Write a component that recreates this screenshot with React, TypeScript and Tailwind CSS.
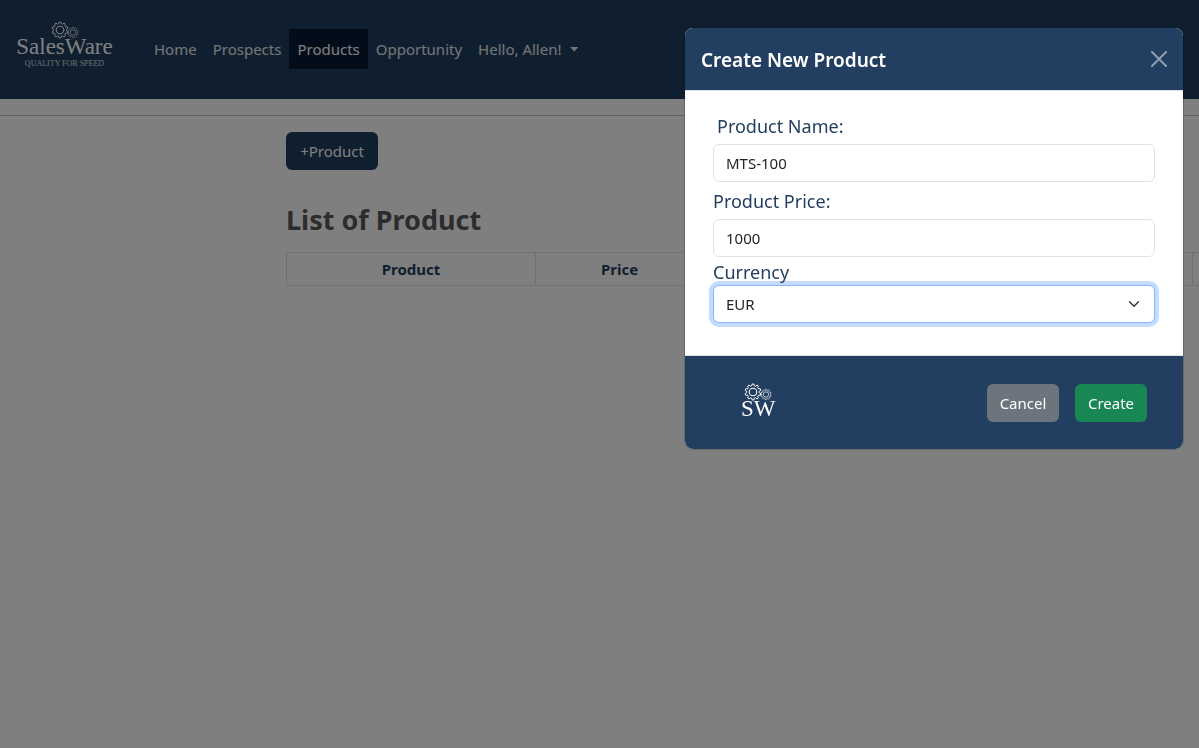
import { useState } from "react";
import type { ReactNode } from "react";

function gearPath(cx: number, cy: number, outer: number, root: number, teeth: number) {
  const step = (Math.PI * 2) / teeth;
  const points: string[] = [];
  for (let i = 0; i < teeth; i++) {
    const a = i * step - Math.PI / 2;
    const corners: [number, number][] = [
      [root, -0.32],
      [outer, -0.18],
      [outer, 0.18],
      [root, 0.32],
    ];
    for (const [r, offset] of corners) {
      const t = a + offset * step;
      points.push(`${(cx + r * Math.cos(t)).toFixed(2)} ${(cy + r * Math.sin(t)).toFixed(2)}`);
    }
  }
  return `M${points.join("L")}Z`;
}

function Gears() {
  return (
    <svg viewBox="0 0 28 18" className="h-[18px] w-7" fill="none" stroke="currentColor" strokeLinejoin="round" aria-hidden="true">
      <path d={gearPath(9, 9, 8, 6.4, 10)} strokeWidth="1" />
      <circle cx="9" cy="9" r="3.8" strokeWidth="1.1" />
      <path d={gearPath(22, 11.5, 5.2, 4.2, 10)} strokeWidth="0.6" />
      <circle cx="22" cy="11.5" r="2.7" strokeWidth="0.7" />
    </svg>
  );
}

function NavLink({ children, active = false }: { children: ReactNode; active?: boolean }) {
  return (
    <a
      href="#"
      className={
        active
          ? "flex h-10 items-center bg-[#071b33] px-2 pt-0.5 text-white"
          : "flex h-10 items-center px-2 pt-0.5 text-white/90"
      }
    >
      {children}
    </a>
  );
}

function Navbar() {
  return (
    <nav className="flex h-[99px] items-center bg-[#1f3f5f] pb-0.5 text-[15px]">
      <a href="#" className="flex h-[74px] w-[130px] shrink-0 flex-col items-center border-r border-[#1b3857] pt-[9px] font-['Liberation_Serif',serif] text-white">
        <Gears />
        <span className="-mt-1 text-[23px] leading-6">SalesWare</span>
        <span className="mt-px text-[8px] leading-2 text-white/80">QUALITY FOR SPEED</span>
      </a>
      <div className="ml-4 flex">
        <NavLink>Home</NavLink>
        <NavLink>Prospects</NavLink>
        <NavLink active>Products</NavLink>
        <NavLink>Opportunity</NavLink>
        <NavLink>
          Hello, Allen!
          <svg viewBox="0 0 10 5" className="ml-2 h-[5px] w-[10px]" fill="currentColor" aria-hidden="true">
            <path d="M1 0h8.4L5.2 4.4z" />
          </svg>
        </NavLink>
      </div>
    </nav>
  );
}

function CreateProductDialog() {
  const [name, setName] = useState("MTS-100");
  const [price, setPrice] = useState("1000");
  const [currency, setCurrency] = useState("EUR");
  const field = "h-[38px] w-full rounded-md border border-[#dee2e6] bg-white px-3 text-[15px] text-[#212529] outline-none";
  const label = "text-lg leading-[27px] text-[#223e60]";

  return (
    <div className="fixed inset-0 flex items-start justify-end bg-black/50 px-4 py-7">
      <form
        role="dialog"
        aria-labelledby="dialog-title"
        onSubmit={(e) => e.preventDefault()}
        className="w-full max-w-[498px] overflow-hidden rounded-lg bg-white shadow-[0_0_0_1px_rgba(0,0,0,0.18)]"
      >
        <header className="flex h-[63px] items-center justify-between border-b border-[#dee2e6] bg-[#223e60] px-4 text-white">
          <h2 id="dialog-title" className="pt-0.5 text-[19px] leading-[30px] font-semibold">Create New Product</h2>
          <button type="button" aria-label="Close" className="text-white/50">
            <svg viewBox="0 0 16 16" className="size-4" fill="none" stroke="currentColor" strokeWidth="2" strokeLinecap="round" aria-hidden="true">
              <path d="M1 1l14 14M15 1L1 15" />
            </svg>
          </button>
        </header>

        <div className="flex flex-col px-7 pt-[22px] pb-8">
          <label htmlFor="name" className={`${label} mb-1 px-1`}>Product Name:</label>
          <input id="name" value={name} onChange={(e) => setName(e.target.value)} className={field} />
          <label htmlFor="price" className={`${label} mt-1.5 mb-1`}>Product Price:</label>
          <input id="price" value={price} onChange={(e) => setPrice(e.target.value)} className={field} />
          <label htmlFor="currency" className={`${label} z-10 mt-0.5 -mb-px`}>Currency</label>
          <div className="relative">
            <select
              id="currency"
              value={currency}
              onChange={(e) => setCurrency(e.target.value)}
              className="h-[38px] w-full appearance-none rounded-md border border-[#86b7fe] bg-white px-3 text-[15px] text-[#212529] ring-4 ring-[#c2dbfe] outline-none"
            >
              <option>EUR</option>
              <option>USD</option>
            </select>
            <svg viewBox="0 0 16 16" className="pointer-events-none absolute top-[11px] right-[15px] h-4 w-3" fill="none" stroke="#343a40" strokeWidth="2" strokeLinecap="round" strokeLinejoin="round" aria-hidden="true">
              <path d="m2 5 6 6 6-6" />
            </svg>
          </div>
        </div>

        <footer className="flex h-[94px] items-center justify-between border-t border-[#dee2e6] bg-[#223e60] pr-9 pl-14 text-white">
          <div className="flex flex-col items-center pb-0.5 font-['Liberation_Serif',serif]">
            <Gears />
            <span className="-mt-1 text-[23px] leading-6">SW</span>
          </div>
          <div className="flex gap-4 text-[15px]">
            <button type="button" className="h-[38px] w-[72px] rounded-md bg-[#6c757d] pt-0.5">Cancel</button>
            <button type="submit" className="h-[38px] w-[72px] rounded-md bg-[#198754] pt-0.5">Create</button>
          </div>
        </footer>
      </form>
    </div>
  );
}

export default function App() {
  return (
    <div className="min-h-screen overflow-x-hidden bg-white font-['Noto_Sans',sans-serif] text-[#212529]">
      <Navbar />
      <hr className="mt-4 border-[#c8c9ca]" />
      <main className="pt-4 pl-[286px]">
        <button type="button" className="h-[38px] w-[92px] rounded-md bg-[#1f3f5f] text-[15px] text-white">+Product</button>
        <h1 className="mt-8 text-[27px] leading-9 font-bold text-[#58595b]">List of Product</h1>
        <table className="mt-3.5 w-full table-fixed border-collapse text-[15px] leading-6 text-[#1f3f5f]">
          <colgroup>
            <col className="w-[249px]" />
            <col className="w-[168px]" />
            <col />
            <col className="w-[7px]" />
          </colgroup>
          <thead>
            <tr>
              <th className="border border-[#dee2e6] py-1">Product</th>
              <th className="border border-[#dee2e6] py-1">Price</th>
              <th className="border border-[#dee2e6]" />
              <th className="border border-r-0 border-[#dee2e6]" />
            </tr>
          </thead>
        </table>
      </main>
      <CreateProductDialog />
    </div>
  );
}
